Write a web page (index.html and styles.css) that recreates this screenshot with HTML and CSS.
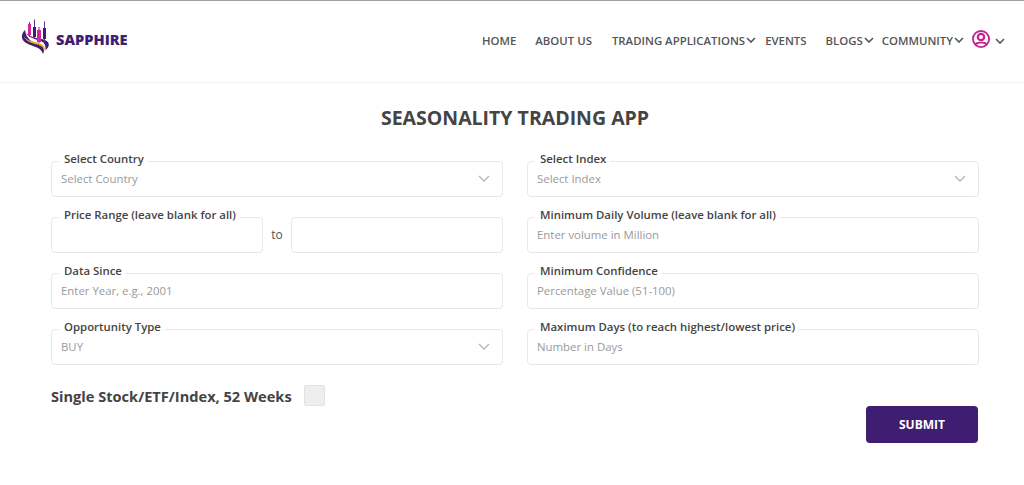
FILE: index.html
```html
<!DOCTYPE html>
<html>
<head>
    <title>Seasonality Trading App</title>
    <link rel="stylesheet" href="styles.css">
</head>
<body>
    <header class="site-header">
        <a class="logo" href="#">
            <svg class="logo-mark" width="31" height="36" viewBox="21 19 31 36">
                <path d="M25 30 C20 35 21 41 28 44 C34 47 41 47 43 54 C45 50 44 46 38 44 C32 42 26 39 25 30 Z" fill="#3f1d70"/>
                <path d="M24 36 C25 41 31 43 37 44.500 C42 46 44 48 44.500 51 C46 47 43 44 37 42.500 C31 41 26 40 24 36 Z" fill="#e8a820"/>
                <path d="M26 33 C29 38 35 39 40 40.500 C44 42 46 45 45.500 50 C50 47 50 42 45 40 C39 38 31 38 26 33 Z" fill="#3f1d70"/>
                <path d="M29.500 22 V37 M34.500 19.500 V39 M39 27 V43 M44.500 21.500 V42" stroke="#5b3a8c" stroke-width="1"/>
                <rect x="28" y="24" width="3" height="11" fill="#d6249a"/>
                <rect x="33" y="27" width="3" height="10" fill="#3f1d70"/>
                <rect x="37" y="30" width="4" height="12" fill="#d6249a"/>
                <rect x="43" y="28" width="3" height="11" fill="#3f1d70"/>
            </svg>
            <span class="logo-text">SAPPHIRE</span>
        </a>
        <nav class="main-nav">
            <a class="nav-home" href="#">HOME</a>
            <a class="nav-about" href="#">ABOUT US</a>
            <a class="nav-apps" href="#">TRADING APPLICATIONS<svg class="chev" width="10" height="6" viewBox="0 0 10 6"><path d="M1 1 L5 5 L9 1" /></svg></a>
            <a class="nav-events" href="#">EVENTS</a>
            <a class="nav-blogs" href="#">BLOGS<svg class="chev" width="10" height="6" viewBox="0 0 10 6"><path d="M1 1 L5 5 L9 1" /></svg></a>
            <a class="nav-community" href="#">COMMUNITY<svg class="chev" width="10" height="6" viewBox="0 0 10 6"><path d="M1 1 L5 5 L9 1" /></svg></a>
            <a class="nav-user" href="#">
                <svg width="18" height="18" viewBox="0 0 18 18">
                    <circle cx="9" cy="9" r="9" fill="#c2238f"/>
                    <path d="M9 2 A7 7 0 0 1 14.800 13 C13 11.300 5 11.300 3.200 13 A7 7 0 0 1 9 2 Z" fill="#fff"/>
                    <path d="M4.500 14.500 C6.500 13 11.500 13 13.500 14.500 A6.500 6.500 0 0 1 4.500 14.500 Z" fill="#fff"/>
                    <circle cx="9" cy="7" r="3.200" fill="#fff" stroke="#c2238f" stroke-width="2.200"/>
                </svg>
                <svg class="chev" width="10" height="6" viewBox="0 0 10 6"><path d="M1 1 L5 5 L9 1" /></svg>
            </a>
        </nav>
    </header>

    <main class="page">
        <h1>SEASONALITY TRADING APP</h1>
        <form class="app-form">
            <fieldset class="field select-field">
                <legend>Select Country</legend>
                <span class="placeholder">Select Country</span>
                <svg class="select-arrow" width="12" height="7" viewBox="0 0 12 7"><path d="M1 1 L6 6 L11 1" /></svg>
            </fieldset>
            <fieldset class="field select-field">
                <legend>Select Index</legend>
                <span class="placeholder">Select Index</span>
                <svg class="select-arrow" width="12" height="7" viewBox="0 0 12 7"><path d="M1 1 L6 6 L11 1" /></svg>
            </fieldset>

            <div class="price-range">
                <fieldset class="field">
                    <legend>Price Range (leave blank for all)</legend>
                </fieldset>
                <span class="to">to</span>
                <div class="field plain-box"></div>
            </div>
            <fieldset class="field">
                <legend>Minimum Daily Volume (leave blank for all)</legend>
                <span class="placeholder">Enter volume in Million</span>
            </fieldset>

            <fieldset class="field">
                <legend>Data Since</legend>
                <span class="placeholder">Enter Year, e.g., 2001</span>
            </fieldset>
            <fieldset class="field">
                <legend>Minimum Confidence</legend>
                <span class="placeholder">Percentage Value (51-100)</span>
            </fieldset>

            <fieldset class="field select-field">
                <legend>Opportunity Type</legend>
                <span class="placeholder">BUY</span>
                <svg class="select-arrow" width="12" height="7" viewBox="0 0 12 7"><path d="M1 1 L6 6 L11 1" /></svg>
            </fieldset>
            <fieldset class="field">
                <legend>Maximum Days (to reach highest/lowest price)</legend>
                <span class="placeholder">Number in Days</span>
            </fieldset>
        </form>
        <div class="form-bottom">
            <div class="single-stock">
                <span>Single Stock/ETF/Index, 52 Weeks</span>
                <span class="checkbox"></span>
            </div>
            <button class="submit" type="button">SUBMIT</button>
        </div>
    </main>
</body>
</html>
```

FILE: styles.css
```css
* {
    box-sizing: border-box;
}

body {
    margin: 0;
    font-family: 'Open Sans', sans-serif;
    color: #444;
    background: #fff;
    overflow: hidden;
}

.site-header {
    height: 83px;
    border-top: 1px solid #a09ea3;
    border-bottom: 1px solid #f2f2f2;
    display: flex;
    justify-content: space-between;
    padding: 0 19px 0 21px;
}

.logo {
    display: flex;
    align-items: flex-start;
    padding-top: 18px;
    text-decoration: none;
}

.logo-mark {
    display: block;
}

.logo-text {
    font-family: 'Open Sans', sans-serif;
    font-size: 14.600px;
    font-weight: 800;
    color: #3f1d70;
    margin: 11px 0 0 4px;
    line-height: 18px;
}

.main-nav {
    display: flex;
    align-items: flex-start;
    padding-top: 29px;
}

.main-nav a {
    display: flex;
    align-items: center;
    height: 20px;
    font-size: 11.400px;
    font-weight: 600;
    color: #555;
    text-decoration: none;
    white-space: nowrap;
}

.nav-home { margin-right: 19px; }
.nav-about { margin-right: 20px; }
.nav-apps { margin-right: 9px; }
.nav-events { margin-right: 19px; }
.nav-blogs { margin-right: 8px; }
.nav-community { margin-right: 8px; }

.main-nav .nav-user {
    margin-top: -1px;
}

.chev {
    margin-left: 1px;
    fill: none;
    stroke: #555;
    stroke-width: 1.600;
}

.nav-user .chev {
    margin: 4px 0 0 5px;
}

.page {
    padding: 0 45px 0 51px;
}

h1 {
    margin: 21px 0 0;
    text-align: center;
    font-size: 19.500px;
    line-height: 27px;
    font-weight: 700;
    color: #444;
}

.app-form {
    display: grid;
    grid-template-columns: 452px 452px;
    column-gap: 24px;
    row-gap: 10px;
    margin-top: 20px;
}

.field {
    position: relative;
    margin: 0;
    height: 46px;
    min-width: 0;
    padding: 0 9px;
    border: 1px solid #e8e8e8;
    border-radius: 4px;
}

.field legend {
    margin-left: -2px;
    padding: 0 4px 4px 5px;
    font-size: 11.400px;
    font-weight: 600;
    line-height: 16px;
    color: #444;
}

.placeholder {
    display: block;
    font-size: 11.400px;
    line-height: 18px;
    margin-top: -1px;
    color: #999;
}

.select-arrow {
    position: absolute;
    right: 12px;
    top: 4px;
    fill: none;
    stroke: #b5b5b5;
    stroke-width: 1.300;
}

.price-range {
    display: flex;
    align-items: flex-end;
}

.price-range .field {
    width: 212px;
    flex: none;
}

.to {
    width: 28px;
    text-align: center;
    font-size: 12px;
    line-height: 36px;
    color: #555;
}

.price-range .plain-box {
    width: 212px;
    height: 36px;
}

.form-bottom {
    display: flex;
    justify-content: space-between;
    align-items: flex-start;
    margin-top: 20px;
    width: 927px;
}

.single-stock {
    display: flex;
    align-items: center;
    gap: 12px;
    font-size: 14.600px;
    font-weight: 700;
    color: #444;
}

.checkbox {
    width: 21px;
    height: 21px;
    background: #eeeeee;
    border: 1px solid #e2e2e2;
    border-radius: 2px;
}

.submit {
    margin-top: 21px;
    width: 112px;
    height: 37px;
    background: #3f1d70;
    border: none;
    border-radius: 4px;
    color: #fff;
    font-family: 'Open Sans', sans-serif;
    font-size: 12px;
    font-weight: 700;
}
```
